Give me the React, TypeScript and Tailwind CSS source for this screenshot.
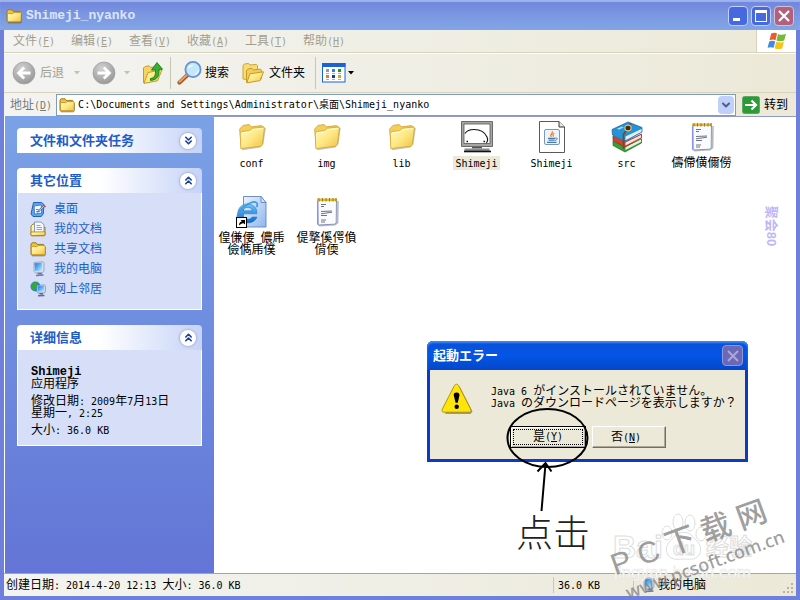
import React from "react";
import { ChevronDown, ChevronsDown, ChevronsUp } from "lucide-react";

type IconProps = { className?: string };

// Latin runs sit on a half-width grid next to the 12px Chinese glyphs
const Mixed: React.FC<{ text: string }> = ({ text }) => (
  <>
    {text.split(/([\x20-\x7e]+)/).map((part, i) =>
      i % 2 ? (
        <span key={i} className="font-['DejaVu_Sans_Mono',monospace] text-[10px] leading-none whitespace-pre-wrap">{part}</span>
      ) : (
        part
      )
    )}
  </>
);

const Accel: React.FC<{ label: string; letter: string }> = ({ label, letter }) => (
  <>
    {label}
    <span className="font-['DejaVu_Sans_Mono',monospace] text-[10px] leading-none">
      (<u>{letter}</u>)
    </span>
  </>
);

/* ---------- icons ---------- */

const Defs = () => (
  <svg width="0" height="0" className="absolute" aria-hidden="true">
    <defs>
      <linearGradient id="fold" x1="0" y1="0" x2="1" y2="1">
        <stop offset="0" stopColor="#fffbc4" />
        <stop offset="0.5" stopColor="#fde882" />
        <stop offset="1" stopColor="#f0bf45" />
      </linearGradient>
      <linearGradient id="screen" x1="0" y1="0" x2="1" y2="1">
        <stop offset="0" stopColor="#2e6fe0" />
        <stop offset="0.5" stopColor="#58b4f4" />
        <stop offset="1" stopColor="#c4ecff" />
      </linearGradient>
      <radialGradient id="disc" cx="0.4" cy="0.3" r="0.8">
        <stop offset="0" stopColor="#d2d2d2" />
        <stop offset="1" stopColor="#919191" />
      </radialGradient>
      <linearGradient id="ieBlue" x1="0" y1="0" x2="0" y2="1">
        <stop offset="0" stopColor="#6cc6f5" />
        <stop offset="1" stopColor="#1268c4" />
      </linearGradient>
      <linearGradient id="page" x1="0" y1="0" x2="1" y2="1">
        <stop offset="0" stopColor="#eaf4ff" />
        <stop offset="1" stopColor="#8fb6ee" />
      </linearGradient>
    </defs>
  </svg>
);

const SmallFolder: React.FC<IconProps> = ({ className }) => (
  <svg viewBox="0 0 16 16" className={className ?? "w-4 h-4"}>
    <path d="M2 14.8h12.6l1-1V6" fill="none" stroke="#3b3a2c" strokeOpacity="0.55" />
    <path d="M1 13.5V3l1-1.2h4L7.2 3.4h6.3l.8 1V13l-.9.9H1.6z" fill="#eec33f" stroke="#a27a14" />
    <path d="M1.4 13.5V6.4l1-.8h4.4l1.2-1h6.4l.8.8V13l-.9.8H2z" fill="url(#fold)" stroke="#b88a1c" strokeWidth="0.8" />
  </svg>
);

const BigFolder = () => (
  <svg viewBox="0 0 32 32" className="w-8 h-8">
    <path d="M6 28.4l18-2.6 2.8-3.6L29 7" fill="none" stroke="#8c8c8c" strokeOpacity="0.5" strokeWidth="1.6" />
    <path d="M5.5 27L3.6 8.2 5 6.6l2-2.2 6-.8 2.4 2.2 10-1.2L28 6.4 26 23z" fill="#f3cf58" stroke="#cfa02c" strokeWidth="0.8" />
    <path d="M4.8 27.600L4.200 12l1.800-1.600 7.600-.6 2.800-2.600 11.400-1.200.6 1.200-2 16.600-1.400 1.400z" fill="url(#fold)" stroke="#d0a534" strokeWidth="0.8" />
    <path d="M6.2 11.8l7.8-.8 2.8-2.4 10-1" fill="none" stroke="#fffde0" strokeWidth="1" />
  </svg>
);

const NavDisc: React.FC<{ back?: boolean }> = ({ back }) => (
  <svg viewBox="0 0 24 24" className="w-6 h-6">
    <circle cx="12" cy="12" r="11" fill="url(#disc)" stroke="#a3a3a3" strokeWidth="0.8" />
    <path
      d={back ? "M18.5 12H7M12.2 6.4L6.6 12l5.6 5.6" : "M5.5 12H17M11.8 6.4l5.6 5.6-5.6 5.6"}
      fill="none"
      stroke="#fff"
      strokeWidth="2.8"
    />
  </svg>
);

const UpFolder = () => (
  <svg viewBox="0 0 22 24" className="w-[22px] h-6">
    <path d="M1.5 21.5V7l1.4-1.4 4.2-.8 1.4 1.6 7-.8V18z" fill="#f5d463" stroke="#c69b2a" />
    <path d="M2 22.4L6 11.6l14-3-4.4 11.2z" fill="url(#fold)" stroke="#c69b2a" />
    <path d="M8.5 17.5c4.4-.6 5.2-3 5-8.5H9.500L15 1.600l5.500 6.600-3.500.2c.4 6.600-1.600 10.400-8.500 11z" fill="#37b030" stroke="#1b7d1b" strokeWidth="0.9" />
  </svg>
);

const Magnifier = () => (
  <svg viewBox="0 0 26 26" className="w-[26px] h-[26px]">
    <path d="M2.500 22.500l8.500-8" stroke="#a55a28" strokeWidth="4.2" strokeLinecap="round" />
    <path d="M2.500 21.800l7.500-7" stroke="#f0a068" strokeWidth="2" strokeLinecap="round" />
    <circle cx="16" cy="9.500" r="7.600" fill="#c3e8fb" stroke="#6791d6" strokeWidth="1.8" />
    <path d="M10.800 9c.6-3.200 3.200-4.800 6.400-4.200-2.600 1.200-4.600 2.600-6.400 4.200z" fill="#fff" />
    <path d="M18 14.500c2-.8 3.200-2.200 3.600-4.200" stroke="#fff" strokeWidth="1.2" fill="none" />
  </svg>
);

const FoldersIcon = () => (
  <svg viewBox="0 0 24 22" className="w-6 h-[22px]">
    <path d="M2 17V3.500L3.400 2l4.200-.6L9 3l6.500-.6 1 1.200V7L6 17.500z" fill="#f7dc74" stroke="#cda437" />
    <path d="M5.500 20.500V8.400L7 7l4-.6L12.400 8l7.200-.8.8 1V17z" fill="#f3cd58" stroke="#c69b2a" />
    <path d="M5.800 20.800L9 11.800l13.500-2-3.400 8.800z" fill="url(#fold)" stroke="#c69b2a" />
  </svg>
);

const ViewsIcon = () => (
  <svg viewBox="0 0 24 20" className="w-6 h-5">
    <rect x="0.500" y="0.500" width="22.500" height="18.500" fill="#fff" stroke="#1a63d6" />
    <rect x="0" y="0" width="23.500" height="4" fill="#1b62d8" />
    <path d="M4 6h3v3H4z" fill="#8d94c8" />
    <path d="M10 6h3v3h-3z" fill="#3f7be8" />
    <path d="M16 6h3v3h-3z" fill="#189a2a" />
    <path d="M4 12h3v3H4z" fill="#e8704a" />
    <path d="M10 12h3v3h-3z" fill="#183c9c" />
    <path d="M16 12h3v3h-3z" fill="#d9a520" />
    <path d="M4 10.500h3M10 10.500h3M16 10.500h3M4 16.500h3M10 16.500h3M16 16.500h3" stroke="#a9b0c4" />
  </svg>
);

const XpFlag = () => (
  <svg viewBox="0 0 20 18" className="w-5 h-[18px]">
    <path d="M4.2 1.6C6.4.4 8.4.4 10 1.4L8.500 8.200c-2-1-4-.8-6 .1z" fill="#ee5a29" />
    <path d="M11 1.900c2.600 1.200 5 1 8 0l-1.800 6.700c-2.600 1-5 1-7.700-.1z" fill="#79b93a" />
    <path d="M2.200 9.400c2.200-1 4-1 6 0l-1.600 6.400c-1.800-.8-3.800-.9-6 0z" fill="#3f8be0" />
    <path d="M9.200 9.800c2.400 1.100 5 1 7.700.1l-1.700 6.500c-2.800 1-5 .8-7.600-.2z" fill="#f8c21c" />
  </svg>
);

const DesktopIcon = () => (
  <svg viewBox="0 0 16 16" className="w-4 h-4">
    <path d="M3.500 1.500h8l2.500 2-.8 9.500-2 2.500H3L1 13z" fill="#5aa8ea" stroke="#1d63b8" />
    <path d="M4.200 5l7-1 .4 8-7 1z" fill="#fff" stroke="#2f5fa8" strokeWidth="0.7" />
    <path d="M6 8.500h2.500M6 10.800l3.600-.4" stroke="#4b6ec0" strokeWidth="0.9" />
    <path d="M14.500 5.500L9 10.500l-1.500.7.6-1.600 5.400-5z" fill="#d8e8fb" stroke="#244c92" strokeWidth="0.7" />
    <path d="M14 4.500l1.500 1.500" stroke="#d23b2a" strokeWidth="1.5" />
  </svg>
);

const DocsIcon = () => (
  <svg viewBox="0 0 16 16" className="w-4 h-4">
    <path d="M1 14V5l2-2h3v10l9-7v8l-.8.8H1.800z" fill="url(#fold)" stroke="#a87f1c" />
    <path d="M4.500 1h6.500L14 3.800V12H4.500z" fill="#f6faff" stroke="#6a86b8" strokeWidth="0.8" />
    <path d="M6.500 4.500h4M6.500 6.500h5.500M6.500 8.500h5.500" stroke="#7b9bd4" strokeWidth="0.9" />
    <path d="M1 14.600V11l14-.2v3.600z" fill="url(#fold)" stroke="#a87f1c" strokeWidth="0.8" />
  </svg>
);

const ComputerIcon = () => (
  <svg viewBox="0 0 16 16" className="w-4 h-4">
    <path d="M4 1.500l8.500-.8 1.500 1V10l-1.400 1.800-7 .2L4 10.500z" fill="#d5dcea" stroke="#8a94b4" strokeWidth="0.7" />
    <path d="M4.600 2.300l7.200-.6V9.800L5 10z" fill="url(#screen)" />
    <path d="M7.500 12.500h4.500M6 14.500l7.500-.5" stroke="#6e7aa4" strokeWidth="1.6" />
  </svg>
);

const NetworkIcon = () => (
  <svg viewBox="0 0 16 16" className="w-4 h-4">
    <circle cx="5.500" cy="5.500" r="5" fill="#2c7fd8" />
    <path d="M1.500 3.500c1.500-2.500 5-3.200 7-1.500C6.500 4 7 7.500 4.500 9.500 2 9 .4 6.500 1.500 3.500z" fill="#35a83b" />
    <path d="M7 4.500l7.500-.6.9.8v6l-1.200 1.300-6.200.1L7 10.500z" fill="#d5dcea" stroke="#7b86ab" strokeWidth="0.7" />
    <path d="M7.700 5.200l6.300-.4v5.400l-6 .2z" fill="url(#screen)" />
    <path d="M9.500 12.800h3.500M8 14.700l6.500-.3" stroke="#5e6a96" strokeWidth="1.5" />
  </svg>
);

const ShimejiApp = () => (
  <svg viewBox="0 0 32 32" className="w-8 h-8">
    <path d="M.5.5h31v25H.5z" fill="#a5a5a5" stroke="#6a6a6a" />
    <path d="M3 3h26v19.500H3z" fill="#fff" stroke="#555" strokeWidth="0.8" />
    <path d="M4 12.500c1.500-2.500 5-4 9-4 6 0 11 3 13 7.500 1 2.500.8 4.500-.8 5.800" fill="none" stroke="#111" strokeWidth="1.1" />
    <path d="M5.500 20.500H7M22.500 20.500H24" stroke="#111" strokeWidth="1.5" />
    <path d="M11 26h10v1.500H11z" fill="#555" />
    <path d="M3.500 27.500h25V30h-25z" fill="#8b8b8b" />
    <path d="M3 30.500h27" stroke="#111" strokeWidth="1.6" />
  </svg>
);

const JarIcon = () => (
  <svg viewBox="0 0 32 32" className="w-8 h-8">
    <path d="M3.500.5H23l5.500 5.500v25.500h-25z" fill="#fff" stroke="#5a5a5a" />
    <path d="M23 .5V6h5.500" fill="#e8e8e8" stroke="#333" />
    <rect x="8.500" y="8.500" width="15" height="15" rx="1.5" fill="#edf3fa" stroke="#7b97bb" />
    <path d="M16 10.500c2 1.600-3 2.800-.6 5.400M18.400 12.300c-1.800 1-1.800 1.600-.8 3.300" fill="none" stroke="#ee7f2d" strokeWidth="1.3" />
    <path d="M12 17.400h7.400M12.600 19.200h6M11 21.400h9.500" stroke="#4679ad" strokeWidth="1.2" />
    <path d="M19.600 16.800c2.600 0 1.600 2.400-.8 2.600" fill="none" stroke="#4679ad" />
  </svg>
);

const RarIcon = () => (
  <svg viewBox="0 0 32 32" className="w-8 h-8">
    <path d="M2 20l12 6 16.500-8v4L14 31 2 24.500z" fill="#35a03a" stroke="#1c6d24" strokeWidth="0.7" />
    <path d="M14.500 26L30 18.500V21l-15.500 8z" fill="#e9efe2" />
    <path d="M2 15l12 6 16.500-8v4L14 26 2 19.500z" fill="#d5402f" stroke="#8d241a" strokeWidth="0.7" />
    <path d="M14.500 21.500L30 14v2.500l-15.500 8z" fill="#f3e7e0" />
    <path d="M1 8.500L17 1l14 5.500v4.500L14 20.500 1.500 14z" fill="#2394d8" stroke="#125c98" strokeWidth="0.7" />
    <path d="M14.500 15.500L30.500 8v2.800l-16 8.500z" fill="#e6eef3" />
    <path d="M6 7.800l5-2.300 1.800.9-5 2.400z" fill="#a7dcf7" />
    <path d="M20 2.200L12.500 13.500V28" fill="none" stroke="#7b4a24" strokeWidth="1.8" />
    <ellipse cx="17" cy="7" rx="3.200" ry="2.800" fill="#3e2b1b" stroke="#dcbb74" strokeWidth="1.2" />
  </svg>
);

const TextIcon = () => (
  <svg viewBox="0 0 32 32" className="w-8 h-8">
    <path d="M8 29.800l16-1.200 2.600-2L27 5" fill="none" stroke="#9b9b9b" strokeOpacity="0.7" strokeWidth="1.6" />
    <path d="M6.500 3.500h19L25.200 27l-1.600 1.200L7 29z" fill="#f9fbff" stroke="#8896bd" />
    <path d="M6.700 5v23.500" stroke="#8d95e0" strokeWidth="1.5" />
    <path d="M6 3.800h20" stroke="#e2b92c" strokeWidth="2.6" />
    <path d="M8 2v3.500M11.500 2v3.500M15 2v3.500M18.500 2v3.500M22 2v3.500M25 2v3.500" stroke="#8b7528" strokeWidth="0.9" />
    <path d="M10 8.500h5M10 10.500h3M10 15.500l11-.5M10 17.800l11-1.600M10 19.500h6M10 24h5M10 26h4" fill="none" stroke="#5d6474" strokeWidth="0.9" />
  </svg>
);

const UrlIcon = () => (
  <svg viewBox="0 0 32 32" className="w-8 h-8">
    <path d="M7.500.5H25l5 6v24.500H7.500z" fill="url(#page)" stroke="#6f8dc8" />
    <path d="M25 .5v6h5z" fill="#d4e4fb" stroke="#6f8dc8" />
    <path d="M20.800 17.800H6.600c.4 5.800 7.600 7 9.400 3.200h5c-2.800 8.600-18.800 8.200-19.200-3.400C2 6 17.200 5 20.400 13.600c.4 1.400.5 2.800.4 4.200zM6.800 14.800h9.600c-.8-4.400-8.400-4.600-9.600 0z" fill="url(#ieBlue)" fillRule="evenodd" stroke="#1b6cc4" strokeWidth="0.5" />
    <path d="M2 24C-2 16 15 3 20.500 6.600c1.200.8.6 3.400 0 4.600" fill="none" stroke="#3d9be0" strokeWidth="1.7" />
    <rect x="0.500" y="21.500" width="10" height="10" fill="#fff" stroke="#000" />
    <path d="M3 29.500c0-2.600 1.400-4 3-4.200L4.500 24H9v4.500l-1.400-1.300C5.800 27 4.600 28 3 29.500z" fill="#000" />
  </svg>
);

const WarningIcon = () => (
  <svg viewBox="0 0 32 32" className="w-8 h-8 shrink-0">
    <path d="M4 31h25.500l2-2.500L19 4" fill="#4f4b9a" fillOpacity="0.55" />
    <path d="M15.500 1.200c1 0 1.600.5 2.200 1.600l12 23.400c.8 1.800.2 3-1.600 3H3c-2 0-2.600-1.200-1.700-3L13.300 2.800c.6-1.100 1.200-1.600 2.200-1.600z" fill="#ffe50a" stroke="#a98d00" strokeWidth="0.9" />
    <path d="M15.600 9.500c2.200 0 3 1.200 2.800 3l-1.600 7.300h-2.200l-1.800-7.300c-.3-1.800.6-3 2.800-3z" fill="#000" />
    <circle cx="15.700" cy="23.700" r="2.200" fill="#000" />
  </svg>
);

/* ---------- side pane ---------- */

const Panel: React.FC<{ title: string; collapsed?: boolean; children?: React.ReactNode }> = ({ title, collapsed, children }) => {
  const Chevron = collapsed ? ChevronsDown : ChevronsUp;
  return (
    <section>
      <header className="flex items-center justify-between h-[25px] pl-[13px] pr-1.5 rounded-t bg-linear-to-r from-white from-45% to-[#c6d3f7]">
        <h2 className="text-[13px] font-bold leading-4 text-[#215dc6]">{title}</h2>
        <button
          type="button"
          aria-label={title}
          className="flex items-center justify-center w-4 h-4 rounded-full bg-white shadow-[0_0_2px_1px_#a9b4d8] text-[#1d3f9c]"
        >
          <Chevron size={13} strokeWidth={3} />
        </button>
      </header>
      {children && <div className="border border-t-0 border-white bg-[#d6dff7]">{children}</div>}
    </section>
  );
};

const PLACES = [
  { name: "桌面", Icon: DesktopIcon },
  { name: "我的文档", Icon: DocsIcon },
  { name: "共享文档", Icon: SmallFolder },
  { name: "我的电脑", Icon: ComputerIcon },
  { name: "网上邻居", Icon: NetworkIcon },
];

const FILES = [
  { name: "conf", Icon: BigFolder },
  { name: "img", Icon: BigFolder },
  { name: "lib", Icon: BigFolder },
  { name: "Shimeji", Icon: ShimejiApp, selected: true },
  { name: "Shimeji", Icon: JarIcon },
  { name: "src", Icon: RarIcon },
  { name: "儔僀僙儞僗", Icon: TextIcon },
  { name: "偟傔偠_儂乕 儉儁乕僕", Icon: UrlIcon },
  { name: "偍撉傒偔偩 偝偄", Icon: TextIcon },
];

const MENUS = [
  ["文件", "F"],
  ["编辑", "E"],
  ["查看", "V"],
  ["收藏", "A"],
  ["工具", "T"],
  ["帮助", "H"],
];

const Caret: React.FC<IconProps> = ({ className }) => (
  <svg viewBox="0 0 6 4" className={`w-1.5 h-1 ${className ?? ""}`}>
    <path d="M0 0h6L3 3.500z" fill="currentColor" />
  </svg>
);

const Toolbar = () => (
  <div className="flex items-center h-10 pl-2 border-t border-white border-b border-b-[#d8d2bd]">
    <button type="button" className="flex items-center gap-1 text-[#a19f8f]">
      <NavDisc back />
      后退
      <Caret className="ml-1.5 text-[#c4c2b4]" />
    </button>
    <button type="button" aria-label="前进" className="flex items-center gap-2 ml-3 text-[#c4c2b4]">
      <NavDisc />
      <Caret />
    </button>
    <button type="button" aria-label="向上" className="ml-3">
      <UpFolder />
    </button>
    <div className="w-px h-8 mx-1.5 bg-[#c9c6b5]" />
    <button type="button" className="flex items-center gap-0.5">
      <Magnifier />
      搜索
    </button>
    <button type="button" className="flex items-center gap-1 ml-3">
      <FoldersIcon />
      文件夹
    </button>
    <div className="w-px h-8 ml-2.5 mr-1.5 bg-[#c9c6b5]" />
    <button type="button" aria-label="查看" className="flex items-center gap-0.5">
      <ViewsIcon />
      <Caret />
    </button>
  </div>
);

const ErrorDialog = () => (
  <div
    role="dialog"
    aria-label="起動エラー"
    className="absolute left-[427px] top-[341px] w-[321px] h-[121px] flex flex-col rounded-t-md bg-[#ece9d8] border-[3px] border-t-0 border-[#0c3ac4] font-['Liberation_Sans','Noto_Sans_CJK_JP',sans-serif]"
  >
    <div className="-mx-[3px] flex items-center justify-between h-[29px] pl-1.5 pr-[5px] rounded-t-md bg-linear-to-b from-[#0a4fd8] via-[#0456e6] to-[#0347c8] shadow-[inset_0_2px_2px_#3c8cf8]">
      <span className="text-[13px] font-bold text-white">起動エラー</span>
      <button type="button" aria-label="关闭" className="flex items-center justify-center w-[21px] h-[21px] rounded-sm border border-[#8d97dc] bg-[#6c68b8]">
        <svg viewBox="0 0 12 12" className="w-3 h-3">
          <path d="M1 1l10 10M11 1L1 11" stroke="#a9a8d4" strokeWidth="2" />
        </svg>
      </button>
    </div>
    <div className="flex items-center gap-4 pl-[11px] pt-2 h-[50px]">
      <WarningIcon />
      <p className="pl-0.5 pb-1 text-[12px] leading-3 whitespace-nowrap">
        <Mixed text="Java 6 がインストールされていません。" />
        <br />
        <Mixed text="Java のダウンロードページを表示しますか？" />
      </p>
    </div>
    <div className="flex gap-1.5 pl-20 mt-1.5 font-['Liberation_Sans','Noto_Sans_CJK_SC',sans-serif]">
      <button type="button" className="w-[76px] h-[22px] p-[2px] border border-black bg-[#ece9d8] shadow-[inset_1px_1px_0_#fff,inset_-1px_-1px_0_#aca899]">
        <span className="flex items-center justify-center h-full border border-dotted border-black">
          <Accel label="是" letter="Y" />
        </span>
      </button>
      <button type="button" className="w-[74px] h-[22px] pr-1.5 border border-white border-r-[#716f64] border-b-[#716f64] bg-[#ece9d8] shadow-[inset_-1px_-1px_0_#aca899]">
        <Accel label="否" letter="N" />
      </button>
    </div>
  </div>
);

const Annotations = () => (
  <>
    <svg viewBox="0 0 100 115" className="absolute left-[500px] top-[400px] w-[100px] h-[115px] pointer-events-none">
      <ellipse cx="47.500" cy="38" rx="40" ry="29" fill="none" stroke="#000" strokeWidth="2" />
      <path d="M41.500 111l4-47M37.500 71.500l8-8.500 6 8.500" fill="none" stroke="#000" strokeWidth="2" />
    </svg>
    <p className="absolute left-[516px] top-[513px] text-[37px] leading-[44px] text-[#222] font-light font-['Liberation_Serif','Noto_Sans_CJK_SC',serif] pointer-events-none">
      点击
    </p>
    <p className="absolute left-[751px] top-[218px] text-[13px] leading-4 font-bold rotate-90 text-[#bdb8f4] whitespace-nowrap pointer-events-none">
      聚会80
    </p>
    <svg viewBox="0 0 160 80" className="absolute left-[610px] top-[510px] w-40 h-20 pointer-events-none">
      <g fill="#fff" stroke="#dedede" strokeWidth="1">
        <text x="3" y="48" fontSize="32" fontWeight="700" fontFamily="Liberation Sans, sans-serif">Bai</text>
        <path d="M58 45c-5-8 2-14 7-19 4-5 13-5 17 0 5 5 12 11 7 19-4 6-11 4-15 4s-12 2-16-4z" />
        <ellipse cx="57" cy="23" rx="5" ry="7" />
        <ellipse cx="68" cy="12" rx="5" ry="8" />
        <ellipse cx="80" cy="13" rx="5" ry="8" />
        <ellipse cx="91" cy="24" rx="5" ry="7" />
        <text x="63" y="45" fontSize="18" fontWeight="700" fontFamily="Liberation Sans, sans-serif">du</text>
        <text x="96" y="45" fontSize="23" fontWeight="700" fontFamily="Noto Sans CJK SC, sans-serif">经验</text>
      </g>
      <text x="4" y="68" fontSize="17" fill="#fff" stroke="#e4e4e0" strokeWidth="0.500" fontFamily="Liberation Sans, sans-serif">jingyan.baidu.com</text>
    </svg>
    <p className="absolute left-[607px] top-[516px] flex gap-2 text-[30px] leading-[44px] font-medium -rotate-20 text-[#858585]/80 pointer-events-none">
      <span>P</span>
      <span>C</span>
      <span>下</span>
      <span>载</span>
      <span>网</span>
    </p>
    <p className="absolute left-[621px] top-[552px] text-[18px] leading-6 font-medium -rotate-20 text-[#858585]/80 font-['Noto_Sans',sans-serif] pointer-events-none">
      www.pcsoft.com.cn
    </p>
  </>
);

export default function App() {
  return (
    <div className="relative flex flex-col h-screen overflow-hidden bg-[#6f80dc] text-[12px] leading-3 text-black font-['Liberation_Sans','Noto_Sans_CJK_SC',sans-serif]">
      <Defs />

      {/* Title bar */}
      <header className="flex items-center h-[30px] shrink-0 pl-1.5 pr-1.5 pt-0.5 bg-linear-to-b from-[#6f83dc] via-[#7b97e1] to-[#82a5e6] shadow-[inset_0_2px_1px_#9db4ee]">
        <SmallFolder />
        <h1 className="flex-1 pl-1 text-[13px] font-bold text-[#dce6fb] font-['Liberation_Mono',monospace]">Shimeji_nyanko</h1>
        <div className="flex gap-[3px]">
          <button type="button" aria-label="最小化" className="flex items-end w-5 h-5 p-1 rounded-sm border border-[#c3cff5] bg-[#4769e0]">
            <span className="w-[7px] h-[3px] bg-white" />
          </button>
          <button type="button" aria-label="最大化" className="w-5 h-5 p-[3px] rounded-sm border border-[#c3cff5] bg-[#4769e0]">
            <span className="block h-full border border-t-[3px] border-white" />
          </button>
          <button type="button" aria-label="关闭" className="flex items-center justify-center w-5 h-5 rounded-sm border border-[#d5c0d8] bg-[#b0627c]">
            <svg viewBox="0 0 12 12" className="w-3 h-3">
              <path d="M1 1l10 10M11 1L1 11" stroke="#fff" strokeWidth="2.2" />
            </svg>
          </button>
        </div>
      </header>

      <div className="flex flex-col flex-1 min-h-0 mx-1 mb-1 bg-linear-to-r from-[#f3f4f2] to-[#ece9d8]">
        {/* Menu bar */}
        <nav className="flex items-stretch justify-between h-[23px] shrink-0 border-b border-[#d8d2bd] text-[#a19f8f]">
          <div className="flex pl-px">
            {MENUS.map(([label, letter]) => (
              <button type="button" key={letter} className="w-[58px] px-2 whitespace-nowrap">
                <Accel label={label} letter={letter} />
              </button>
            ))}
          </div>
          <div className="flex items-center justify-center w-10 bg-white border-l border-[#d8d2bd]">
            <XpFlag />
          </div>
        </nav>

        <Toolbar />

        {/* Address bar */}
        <div className="flex items-center h-[23px] shrink-0 pl-1.5 pr-2">
          <label htmlFor="address" className="pr-1 text-[#7d7b6e]">
            <Accel label="地址" letter="D" />
          </label>
          <div className="flex items-center flex-1 h-[22px] pl-0.5 pr-px border border-[#7f9db9] bg-white">
            <SmallFolder />
            <input
              id="address"
              readOnly
              value="C:\Documents and Settings\Administrator\桌面\Shimeji_nyanko"
              className="flex-1 min-w-0 pl-[3px] text-[10px] outline-none font-['DejaVu_Sans_Mono','Noto_Sans_CJK_SC',monospace]"
            />
            <button type="button" aria-label="展开" className="flex items-center justify-center w-4 h-[18px] rounded-sm bg-[#c1d0fa] text-[#4d6185]">
              <ChevronDown size={12} strokeWidth={4} />
            </button>
          </div>
          <button type="button" className="flex items-center gap-1 pl-1.5">
            <svg viewBox="0 0 18 18" className="w-[18px] h-[18px]">
              <rect x="0.500" y="0.500" width="17" height="17" rx="2" fill="#2c9a38" stroke="#5aa862" />
              <path d="M3 9h11M9.500 4.500L14 9l-4.500 4.500" fill="none" stroke="#fff" strokeWidth="2.2" />
            </svg>
            转到
          </button>
        </div>

        <div className="flex flex-1 min-h-0 border-b border-[#a9a695]">
          {/* Task pane */}
          <aside className="flex flex-col gap-[15px] w-[210px] shrink-0 p-3 border-l border-white bg-linear-to-b from-[#7ba2e7] to-[#6375d6]">
            <Panel title="文件和文件夹任务" collapsed />
            <Panel title="其它位置">
              <ul className="flex flex-col gap-1 px-3 py-2 h-[116px]">
                {PLACES.map(({ name, Icon }) => (
                  <li key={name}>
                    <a href="#" className="flex items-center gap-2 h-4 text-[#215dc6]">
                      <Icon />
                      {name}
                    </a>
                  </li>
                ))}
              </ul>
            </Panel>
            <Panel title="详细信息">
              <div className="h-[95px] pl-[13px] pt-4">
                <p className="font-bold font-['Liberation_Mono',monospace]">Shimeji</p>
                <p>应用程序</p>
                <p className="mt-[5px]">
                  <Mixed text="修改日期: 2009年7月13日" />
                </p>
                <p>
                  <Mixed text="星期一, 2:25" />
                </p>
                <p className="mt-[5px]">
                  <Mixed text="大小: 36.0 KB" />
                </p>
              </div>
            </Panel>
          </aside>

          {/* File list */}
          <main className="flex-1 border-t border-[#8f9bc8] bg-white">
            <ul className="flex flex-wrap">
              {FILES.map(({ name, Icon, selected }, i) => (
                <li key={i} className="flex flex-col items-center gap-[3px] w-[75px] h-[75px] pt-1">
                  <Icon />
                  <span className={`px-0.5 py-px text-center ${selected ? "bg-[#ece9d8]" : ""}`}>
                    {name.split(" ").map((line) => (
                      <span key={line} className="block whitespace-nowrap">
                        <Mixed text={line} />
                      </span>
                    ))}
                  </span>
                </li>
              ))}
            </ul>
          </main>
        </div>

        {/* Status bar */}
        <footer className="flex items-center h-[22px] shrink-0 pl-0.5">
          <span className="flex-1">
            <Mixed text="创建日期: 2014-4-20 12:13 大小: 36.0 KB" />
          </span>
          <span className="w-20 pl-1 py-0.5 border-l border-[#c9c6b5]">
            <Mixed text="36.0 KB" />
          </span>
          <span className="flex items-center gap-0.5 w-[163px] pl-1.5 border-l border-[#c9c6b5]">
            <ComputerIcon />
            我的电脑
          </span>
          <svg viewBox="0 0 12 12" className="absolute right-1.5 bottom-1.5 w-3 h-3">
            <path d="M9 1h2v2H9zM9 5h2v2H9zM9 9h2v2H9zM5 5h2v2H5zM5 9h2v2H5zM1 9h2v2H1z" fill="#b8b4a2" />
          </svg>
        </footer>
      </div>

      <ErrorDialog />
      <Annotations />
    </div>
  );
}
